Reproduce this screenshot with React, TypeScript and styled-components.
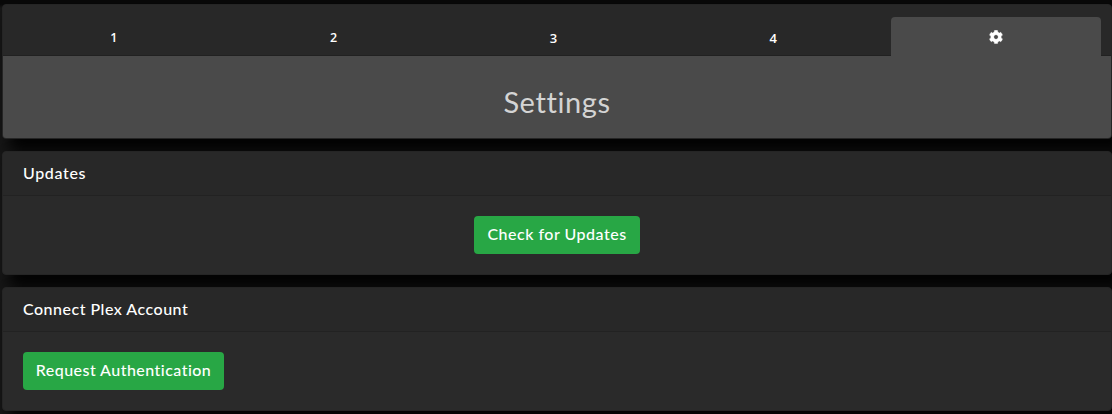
import React from "react";
import styled, { createGlobalStyle } from "styled-components";

const GlobalStyle = createGlobalStyle`
  * { box-sizing: border-box; }
  html { background: #171717; overflow: hidden; }
  body {
    margin: 0;
    font: 500 16px/24px Lato, "Open Sans", sans-serif;
    color: #fff;
  }
`;

const Page = styled.main`
  display: flex;
  flex-direction: column;
  gap: 12px;
  height: 414px;
  padding: 4px 0 0 2px;
  background: linear-gradient(#090909 4px, transparent 8px);
  overflow: hidden;
`;

const Card = styled.section<{ $height: number }>`
  flex: none;
  height: ${(p) => p.$height}px;
  background: #2a2a2a;
  border: 1px solid #252525;
  border-radius: 4px;
  box-shadow: 10px 10px 15px 3px rgba(0, 0, 0, 0.88);
`;

const Tabs = styled.nav`
  display: flex;
  align-items: flex-end;
  height: 51px;
  padding: 0 10px 0 1px;
  background: #282828;
  border-bottom: 1px solid #212121;
  border-radius: 3px 3px 0 0;
`;

const Tab = styled.a<{ $active?: boolean }>`
  flex: ${(p) => (p.$active ? "0 0 210px" : "1 1 0")};
  display: flex;
  justify-content: center;
  align-items: center;
  height: ${(p) => (p.$active ? 39 : 38)}px;
  margin: ${(p) => (p.$active ? "0 0 -1px 8px" : "0")};
  border-radius: 4px 4px 0 0;
  background: ${(p) => (p.$active ? "#4a4a4a" : "transparent")};
  font: 600 13px/20px "Open Sans", sans-serif;
`;

const Digit = styled.span<{ $size: number; $drop: number }>`
  font-size: ${(p) => p.$size}px;
  padding-top: ${(p) => p.$drop}px;
`;

const Banner = styled.div`
  display: flex;
  justify-content: center;
  height: 82px;
  padding-top: 29px;
  background: #4a4a4a;
  border-radius: 0 0 3px 3px;
`;

const Title = styled.h1`
  margin: 0;
  font-size: 29px;
  line-height: 34px;
  font-weight: 400;
  letter-spacing: 0.6px;
  color: #d4d4d4;
`;

const CardHeader = styled.header<{ $spacing: number }>`
  height: 44px;
  padding: 9px 20px;
  background: #282828;
  border-bottom: 1px solid #222;
  border-radius: 3px 3px 0 0;
  letter-spacing: ${(p) => p.$spacing}px;
`;

const CardBody = styled.div<{ $center?: boolean }>`
  display: flex;
  justify-content: ${(p) => (p.$center ? "center" : "flex-start")};
  padding: 20px;
`;

const Button = styled.button<{ $width: number; $spacing: number }>`
  width: ${(p) => p.$width}px;
  height: 38px;
  padding: 0 0 2px;
  border: 0;
  border-radius: 4px;
  background: #28a745;
  color: #fff;
  font: inherit;
  letter-spacing: ${(p) => p.$spacing}px;
  white-space: nowrap;
`;

const GearIcon = () => (
  <svg width="14" height="14" viewBox="0 0 512 512" fill="#fff" aria-label="Settings">
    <path
      stroke="#fff"
      strokeWidth="12"
      d="M487.4 315.7l-42.6-24.6c4.3-23.2 4.3-47 0-70.2l42.6-24.6c4.9-2.8 7.1-8.6 5.5-14-11.1-35.6-30-67.8-54.7-94.6-3.8-4.1-10-5.1-14.8-2.3L380.8 110c-17.900-15.400-38.500-27.300-60.800-35.100V25.800c0-5.600-3.900-10.500-9.400-11.700-36.700-8.200-74.300-7.800-109.200 0-5.500 1.200-9.400 6.100-9.400 11.700V75c-22.200 7.900-42.800 19.800-60.800 35.100L88.700 85.500c-4.900-2.800-11-1.900-14.800 2.300-24.700 26.700-43.600 58.900-54.700 94.600-1.700 5.400.6 11.200 5.500 14L67.300 221c-4.300 23.200-4.300 47 0 70.200l-42.600 24.600c-4.900 2.800-7.100 8.600-5.500 14 11.100 35.600 30 67.800 54.700 94.600 3.800 4.100 10 5.100 14.800 2.300l42.600-24.600c17.900 15.400 38.500 27.300 60.800 35.100v49.200c0 5.600 3.900 10.500 9.400 11.700 36.700 8.200 74.300 7.800 109.200 0 5.500-1.200 9.400-6.100 9.400-11.700v-49.200c22.200-7.900 42.800-19.800 60.800-35.100l42.600 24.600c4.900 2.800 11 1.900 14.800-2.300 24.700-26.700 43.600-58.900 54.700-94.600 1.500-5.500-.7-11.300-5.600-14.100zM256 336c-44.100 0-80-35.900-80-80s35.900-80 80-80 80 35.900 80 80-35.900 80-80 80z"
    />
  </svg>
);

export default function App() {
  return (
    <>
      <GlobalStyle />
      <Page>
        <Card $height={135}>
          <Tabs>
            <Tab><Digit $size={12.5} $drop={3}>1</Digit></Tab>
            <Tab><Digit $size={12.5} $drop={3}>2</Digit></Tab>
            <Tab><Digit $size={13} $drop={4}>3</Digit></Tab>
            <Tab><Digit $size={13} $drop={4}>4</Digit></Tab>
            <Tab $active><GearIcon /></Tab>
          </Tabs>
          <Banner><Title>Settings</Title></Banner>
        </Card>
        <Card $height={124}>
          <CardHeader $spacing={0.65}>Updates</CardHeader>
          <CardBody $center>
            <Button $width={166} $spacing={0.5}>Check for Updates</Button>
          </CardBody>
        </Card>
        <Card $height={124}>
          <CardHeader $spacing={0.5}>Connect Plex Account</CardHeader>
          <CardBody>
            <Button $width={201} $spacing={0.46}>Request Authentication</Button>
          </CardBody>
        </Card>
      </Page>
    </>
  );
}
